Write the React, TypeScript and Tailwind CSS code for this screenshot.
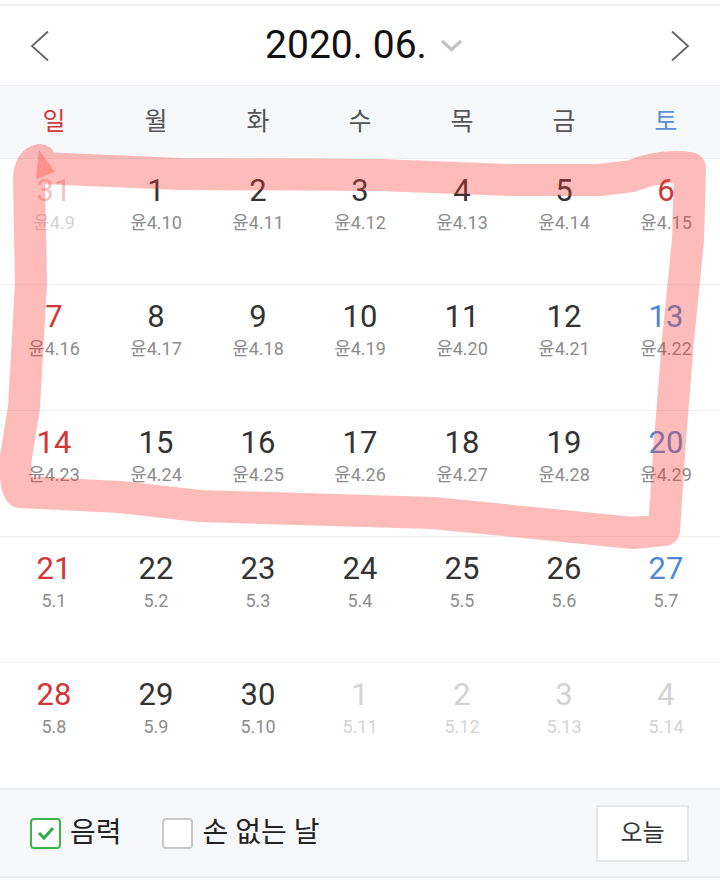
import React from 'react'

type Day = {
  n: number
  lunar: string
  muted?: boolean
  holiday?: boolean
}

const WEEKDAYS = ['일', '월', '화', '수', '목', '금', '토']

const ROWS: Day[][] = [
  [
    { n: 31, lunar: '윤4.9', muted: true },
    { n: 1, lunar: '윤4.10' },
    { n: 2, lunar: '윤4.11' },
    { n: 3, lunar: '윤4.12' },
    { n: 4, lunar: '윤4.13' },
    { n: 5, lunar: '윤4.14' },
    { n: 6, lunar: '윤4.15', holiday: true },
  ],
  [
    { n: 7, lunar: '윤4.16' },
    { n: 8, lunar: '윤4.17' },
    { n: 9, lunar: '윤4.18' },
    { n: 10, lunar: '윤4.19' },
    { n: 11, lunar: '윤4.20' },
    { n: 12, lunar: '윤4.21' },
    { n: 13, lunar: '윤4.22' },
  ],
  [
    { n: 14, lunar: '윤4.23' },
    { n: 15, lunar: '윤4.24' },
    { n: 16, lunar: '윤4.25' },
    { n: 17, lunar: '윤4.26' },
    { n: 18, lunar: '윤4.27' },
    { n: 19, lunar: '윤4.28' },
    { n: 20, lunar: '윤4.29' },
  ],
  [
    { n: 21, lunar: '5.1' },
    { n: 22, lunar: '5.2' },
    { n: 23, lunar: '5.3' },
    { n: 24, lunar: '5.4' },
    { n: 25, lunar: '5.5' },
    { n: 26, lunar: '5.6' },
    { n: 27, lunar: '5.7' },
  ],
  [
    { n: 28, lunar: '5.8' },
    { n: 29, lunar: '5.9' },
    { n: 30, lunar: '5.10' },
    { n: 1, lunar: '5.11', muted: true },
    { n: 2, lunar: '5.12', muted: true },
    { n: 3, lunar: '5.13', muted: true },
    { n: 4, lunar: '5.14', muted: true },
  ],
]

function numberColor(col: number, day: Day) {
  if (day.muted) return col === 0 ? 'text-[#f3c4c4]' : 'text-[#d2d2d2]'
  if (col === 0 || day.holiday) return 'text-[#d23636]'
  if (col === 6) return 'text-[#4f89d6]'
  return 'text-[#333333]'
}

function DayCell({ day, col }: { day: Day; col: number }) {
  return (
    <div className="flex flex-col items-center pt-[16px]">
      <span className={`text-[31px] leading-[31px] ${numberColor(col, day)}`}>{day.n}</span>
      <span
        className={`mt-[8px] text-[18px] leading-[18px] ${day.muted ? 'text-[#d4d4d4]' : 'text-[#8c8c8c]'}`}
      >
        {day.lunar}
      </span>
    </div>
  )
}

export default function App() {
  return (
    <div
      className="relative w-[720px] h-[892px] bg-white overflow-hidden"
      style={{ fontFamily: 'Roboto, "Noto Sans CJK KR", sans-serif' }}
    >
      <div className="h-[4px] bg-white" />
      <div className="h-[2px] bg-[#eeeeee]" />

      {/* Month header */}
      <div className="h-[80px] flex items-center justify-between px-[30px] border-b border-[#eceef1]">
        <svg width="20" height="32" viewBox="0 0 20 32" fill="none">
          <polyline points="18,1.5 2,16 18,30.5" stroke="#666666" strokeWidth="1.8" />
        </svg>
        <div className="flex items-center gap-[13px] ml-[8px]">
          <span className="text-[39px] leading-none text-[#111111]">2020. 06.</span>
          <svg width="23" height="13" viewBox="0 0 23 13" fill="none">
            <polyline points="2,2 11.5,10.5 21,2" stroke="#c2c2c2" strokeWidth="3.2" />
          </svg>
        </div>
        <svg width="20" height="32" viewBox="0 0 20 32" fill="none">
          <polyline points="2,1.5 18,16 2,30.5" stroke="#666666" strokeWidth="1.8" />
        </svg>
      </div>

      {/* Weekday row */}
      <div className="h-[73px] grid grid-cols-7 px-[3px] items-center bg-[#f7f8fa] border-b border-[#eceef1]">
        {WEEKDAYS.map((w, i) => (
          <span
            key={w}
            className={`text-center text-[25px] ${
              i === 0 ? 'text-[#d23c3c]' : i === 6 ? 'text-[#5b8fd9]' : 'text-[#555555]'
            }`}
          >
            {w}
          </span>
        ))}
      </div>

      {/* Weeks */}
      {ROWS.map((row, r) => (
        <div
          key={r}
          className={`grid grid-cols-7 px-[3px] ${
            r === ROWS.length - 1 ? 'h-[125px]' : 'h-[126px] border-b border-[#f0f0f0]'
          }`}
        >
          {row.map((d, c) => (
            <DayCell key={c} day={d} col={c} />
          ))}
        </div>
      ))}

      {/* Footer */}
      <div className="h-[90px] flex items-center justify-between pl-[30px] pr-[31px] bg-[#f7f8fa] border-y-2 border-[#eceef1]">
        <div className="flex items-center">
          <div className="w-[31px] h-[31px] rounded-[4px] border-2 border-[#3cb54a] bg-white flex items-center justify-center">
            <svg width="20" height="16" viewBox="0 0 20 16" fill="none">
              <polyline points="3,8 8,13 17,3" stroke="#2eab44" strokeWidth="3" />
            </svg>
          </div>
          <span className="ml-[9px] text-[28px] leading-none text-[#222222]">음력</span>
          <div className="ml-[40px] w-[31px] h-[31px] rounded-[4px] border-2 border-[#c8c8c8] bg-white" />
          <span className="ml-[10px] text-[28px] leading-none text-[#222222]">손 없는 날</span>
        </div>
        <button className="w-[93px] h-[57px] bg-white border-2 border-[#e5e6e8] text-[24px] text-[#333333]">
          오늘
        </button>
      </div>

      {/* Hand-drawn highlight over the screenshot */}
      <svg className="absolute inset-0 pointer-events-none" width="720" height="892" viewBox="0 0 720 892">
        <path
          d="M 40 168 L 180 174 L 380 175 L 513 180 L 600 180 L 632 176 Q 660 164 690 168 L 688 240 L 678 340 L 670 440 L 664 530 L 633 533 L 433 513 L 200 506 L 120 497 L 20 492 Q 14 484 16 457 L 24 407 L 31 283 L 29 178 Q 30 162 40 160"
          fill="none"
          stroke="rgba(250,60,50,0.34)"
          strokeWidth="32"
          strokeLinecap="round"
          strokeLinejoin="round"
        />
        <polygon points="39,150 55,172 36,179" fill="rgba(250,60,50,0.34)" />
      </svg>
    </div>
  )
}
